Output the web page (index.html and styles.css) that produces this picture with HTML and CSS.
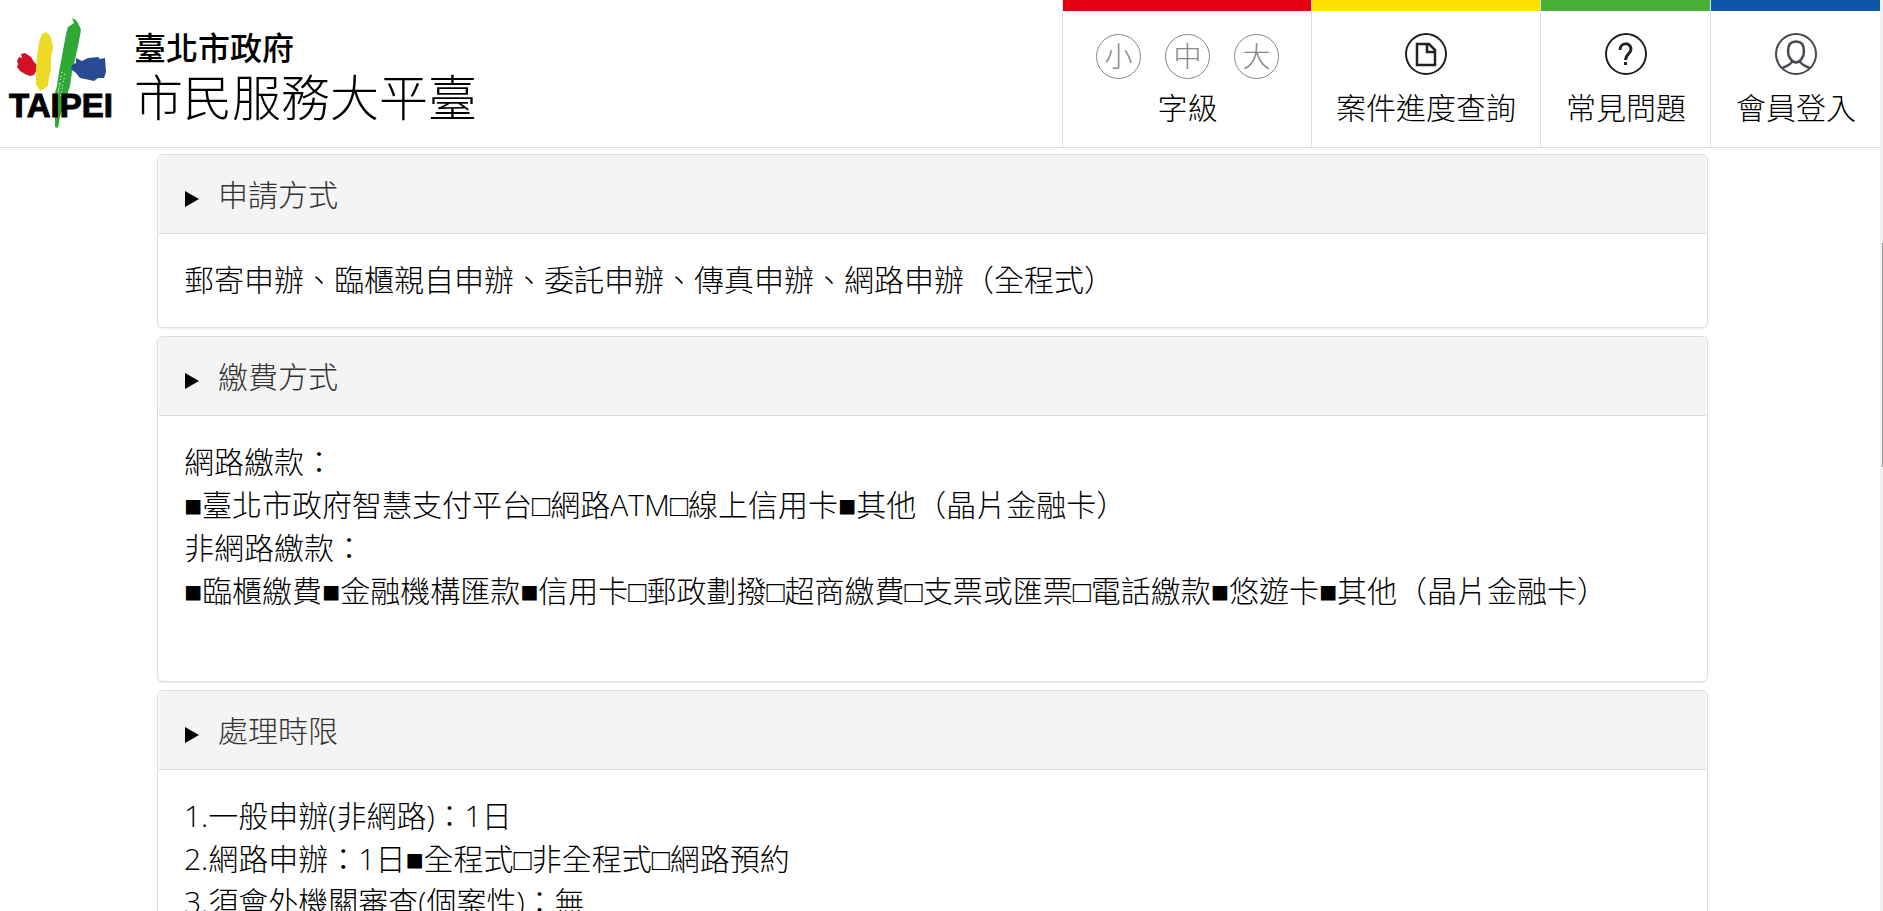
FILE: index.html
```html
<!DOCTYPE html>
<html lang="zh-Hant-TW">
<head>
<meta charset="utf-8">
<meta name="viewport" content="width=device-width, initial-scale=1">
<title>臺北市政府 市民服務大平臺</title>
<link rel="stylesheet" href="styles.css">
</head>
<body>
<header class="site-header">
  <a class="brand" href="#">
    <svg class="brand-logo" viewBox="0 0 108 116" role="img" aria-label="TAIPEI">
      <path fill="#d31027" d="M9 45L11 41L14 42L13 38L17 37L23 41L26 46L29 49L28 55L26 59L22 60L17 58L12 55L9 51L10 48Z"/>
      <path fill="#ecdb26" d="M31 26L34 18L38 16L42 19L44 26L45 32L43 42L43 54L41 62L40 70L36 73L32 75L28 68L28 54L29 40Z"/>
      <path fill="#2fa836" d="M58 18L60 11L66 7L64 2L68 4L71 9L73 14L70 30L67 44L64 56L62 70L59 79L55 85L54 94L52 101L50 112L47 111L47 100L48 90L46 80L49 70L51 56L54 40Z"/>
      <path fill="#2b4a94" d="M64 49L68 47L68 42L74 45L80 42L90 41L92 43L97 42L98 56L96 62L90 62L86 65L77 63L72 62L68 57L63 53Z"/>
      <path stroke="#fff" stroke-width="1" fill="none" stroke-dasharray="1 3 1 2" d="M54 56L49 84M57 58L52 82M52 68L49 78"/>
      <text class="brand-word" x="1" y="101">TAIPEI</text>
    </svg>
    <span class="brand-text">
      <span class="brand-owner">臺北市政府</span>
      <span class="brand-name">市民服務大平臺</span>
    </span>
  </a>
  <nav class="tools" aria-label="工具列">
    <div class="tool tool-red">
      <div class="size-row">
        <button class="size-button" type="button">小</button>
        <button class="size-button" type="button">中</button>
        <button class="size-button" type="button">大</button>
      </div>
      <span class="tool-label">字級</span>
    </div>
    <a class="tool tool-yellow" href="#">
      <svg class="tool-icon" viewBox="0 0 42 42" fill="none" stroke="#222" stroke-width="2" aria-hidden="true">
        <circle cx="21" cy="21" r="20"/>
        <path stroke-width="2.500" d="M12 11H24L30 17V32H12Z M22 11V19H30"/>
      </svg>
      <span class="tool-label">案件進度查詢</span>
    </a>
    <a class="tool tool-green" href="#">
      <svg class="tool-icon" viewBox="0 0 42 42" fill="none" stroke="#222" aria-hidden="true">
        <circle cx="21" cy="21" r="20" stroke-width="2"/>
        <path stroke-width="3" d="M15 17C15 9 26 9 26 16C26 21 20.500 21 20.500 27M20.500 29V32"/>
      </svg>
      <span class="tool-label">常見問題</span>
    </a>
    <a class="tool tool-blue" href="#">
      <svg class="tool-icon" viewBox="0 0 42 42" fill="none" stroke="#444a50" stroke-width="2" aria-hidden="true">
        <circle cx="21" cy="21" r="20"/>
        <path stroke-width="2.500" d="M21 8.500C15 8.500 13 13 13 18C13 24 17 29.500 21 29.500C25 29.500 29 24 29 18C29 13 27 8.500 21 8.500Z M17 28Q17 31 7.500 35M25 28Q25 31 34.500 35"/>
      </svg>
      <span class="tool-label">會員登入</span>
    </a>
  </nav>
</header>

<main class="content">
  <details class="card" open>
    <summary class="card-head"><svg class="marker" viewBox="0 0 14 16" aria-hidden="true"><path d="M0 0L14 8L0 16Z"/></svg>申請方式</summary>
    <div class="card-body">
      <p>郵寄申辦、臨櫃親自申辦、委託申辦、傳真申辦、網路申辦（全程式）</p>
    </div>
  </details>
  <details class="card" open>
    <summary class="card-head"><svg class="marker" viewBox="0 0 14 16" aria-hidden="true"><path d="M0 0L14 8L0 16Z"/></svg>繳費方式</summary>
    <div class="card-body">
      <p>網路繳款：<br>■臺北市政府智慧支付平台□網路ATM□線上信用卡■其他（晶片金融卡）<br>非網路繳款：<br>■臨櫃繳費■金融機構匯款■信用卡□郵政劃撥□超商繳費□支票或匯票□電話繳款■悠遊卡■其他（晶片金融卡）<br><br></p>
    </div>
  </details>
  <details class="card" open>
    <summary class="card-head"><svg class="marker" viewBox="0 0 14 16" aria-hidden="true"><path d="M0 0L14 8L0 16Z"/></svg>處理時限</summary>
    <div class="card-body">
      <p>1.一般申辦(非網路)：1日<br>2.網路申辦：1日■全程式□非全程式□網路預約<br>3.須會外機關審查(個案性)：無</p>
    </div>
  </details>
</main>
<div class="scroll-track" aria-hidden="true"><div class="scroll-thumb"></div></div>
</body>
</html>
```
FILE: styles.css
```css
* { box-sizing: border-box; }

body {
  margin: 0;
  height: 100vh;
  overflow: hidden;
  padding-right: 3px;
  background: #fff;
  color: #000;
  font-family: "Open Sans", "Liberation Sans", "Noto Sans CJK TC", sans-serif;
  font-size: 30px;
  font-weight: 300;
  line-height: 43px;
}

a { color: inherit; text-decoration: none; }

.site-header {
  display: flex;
  justify-content: space-between;
  height: 148px;
  border-bottom: 1px solid #ddd;
}

.brand {
  display: flex;
  align-items: center;
  gap: 18px;
  padding-left: 8px;
}

.brand-logo { width: 108px; height: 116px; }

.brand-word {
  font-family: "Liberation Sans", sans-serif;
  font-size: 33px;
  font-weight: 700;
  stroke: #000;
  stroke-width: 1;
}

.brand-text { display: flex; flex-direction: column; padding-top: 2px; }

.brand-owner {
  font-size: 32px;
  font-weight: 500;
  line-height: 44px;
}

.brand-name { font-size: 49px; line-height: 54px; }

.tools { display: flex; }

.tool {
  display: flex;
  flex-direction: column;
  align-items: center;
  padding: 33px 24px 0;
  border-left: 1px solid #ddd;
  background: linear-gradient(var(--accent), var(--accent)) 0 0 / 100% 11px no-repeat;
}

.tool-red { --accent: #e60012; padding: 34px 32px 0 33px; }
.tool-yellow { --accent: #ffe100; }
.tool-green { --accent: #45b035; padding-left: 25px; }
.tool-blue { --accent: #0d56a8; padding-left: 25px; }

.tool-icon { width: 42px; height: 42px; margin-bottom: 11px; }

.size-row { display: flex; gap: 24px; margin-bottom: 7px; }

.size-button {
  width: 45px;
  height: 45px;
  padding: 0;
  border: 1px solid #888;
  border-radius: 50%;
  background: none;
  color: #888;
  font: inherit;
  font-size: 28px;
  line-height: 43px;
}

.content {
  display: flex;
  flex-direction: column;
  gap: 8px;
  padding: 6px 172px 0 157px;
}

.card {
  border: 1px solid #ddd;
  border-radius: 6px;
  background: #fff;
  box-shadow: 0 1px 2px rgba(0, 0, 0, 0.08);
}

.card-head {
  display: flex;
  align-items: center;
  gap: 19px;
  height: 79px;
  margin: 0 1px;
  padding-left: 26px;
  border-bottom: 1px solid #ddd;
  border-radius: 5px 5px 0 0;
  background: #f4f4f4;
  color: #333;
  list-style: none;
}

.marker { width: 14px; height: 16px; margin-top: 10px; fill: #000; }

.card-body { padding: 24px 26px 26px; }

.card-body p { margin: 0; }

.scroll-track {
  position: fixed;
  top: 0;
  right: 0;
  bottom: 0;
  width: 3px;
  padding: 243px 0 0 2px;
  background: #f1f1f1;
}

.scroll-thumb { height: 224px; background: #999; }
```
